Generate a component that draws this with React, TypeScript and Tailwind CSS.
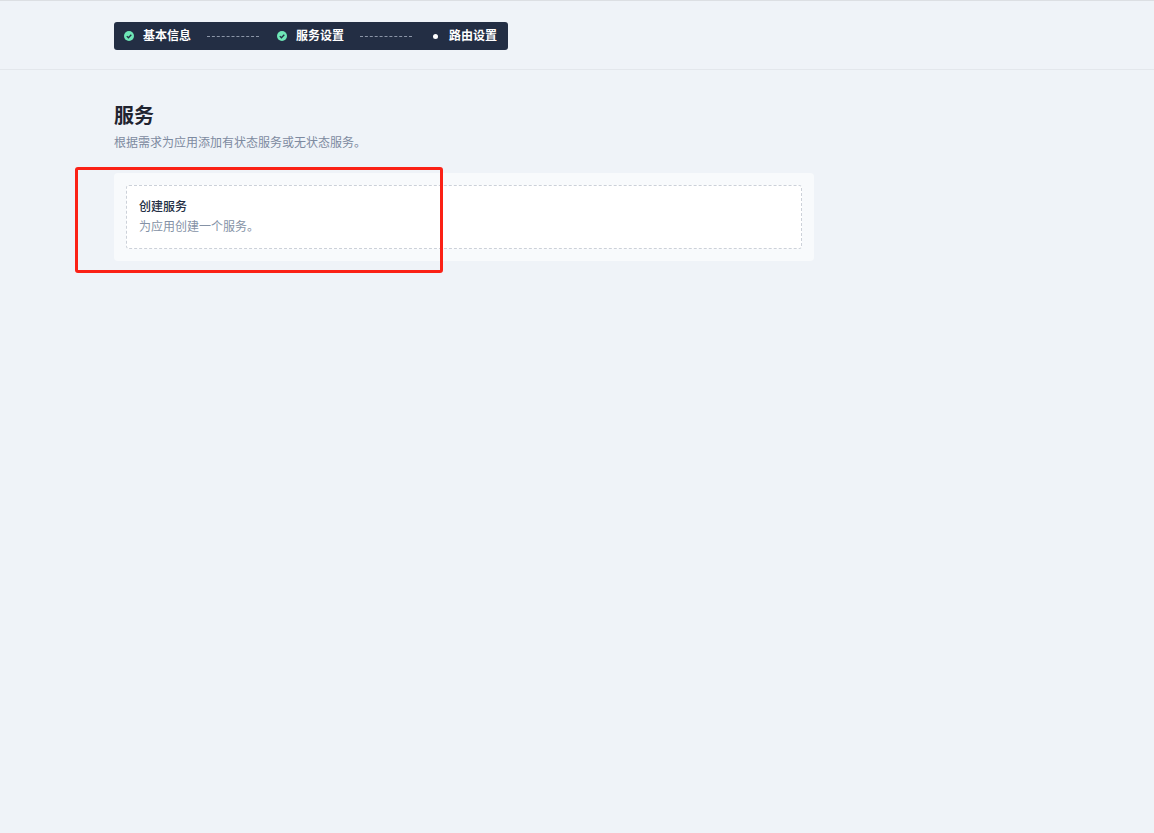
import React from 'react';

const font = { fontFamily: '"Inter", "Noto Sans CJK SC", sans-serif' };

const CheckIcon = () => (
  <svg width="10" height="10" viewBox="0 0 10 10" className="shrink-0">
    <circle cx="5" cy="5" r="5" fill="#6ee7b7" />
    <path d="M2.8 5.1 4.4 6.7 7.3 3.7" fill="none" stroke="#232e44" strokeWidth="1.3" />
  </svg>
);

const Dashes = () => <div className="w-[52px] border-t border-dashed border-[#8b95a7]" />;

const App = () => {
  return (
    <div className="relative min-h-[833px] bg-[#eff3f8] font-['Inter','Noto_Sans_CJK_SC',sans-serif]" style={font}>
      <header className="h-[70px] border-t border-b border-t-[#dcdfe3] border-b-[#e3e7ec] pl-[114px] pt-[21px]">
        <div className="flex h-7 w-[394px] items-center rounded-[3px] bg-[#232e44] pl-[10px] text-xs font-bold text-white">
          <CheckIcon />
          <span className="ml-[9px] w-12 whitespace-nowrap">基本信息</span>
          <div className="ml-4"><Dashes /></div>
          <div className="ml-[18px]"><CheckIcon /></div>
          <span className="ml-[9px] w-12 whitespace-nowrap">服务设置</span>
          <div className="ml-4"><Dashes /></div>
          <div className="ml-[21px] h-[5px] w-[5px] rounded-full bg-white" />
          <span className="ml-[11px] w-12 whitespace-nowrap">路由设置</span>
        </div>
      </header>

      <main className="pl-[114px] pt-[32px]">
        <h1 className="text-xl leading-7 font-semibold text-[#1f2430]">服务</h1>
        <p className="mt-[3px] text-xs leading-5 text-[#7d8aa0]">根据需求为应用添加有状态服务或无状态服务。</p>
        <div className="mt-[20px] w-[700px] rounded bg-[#f8fafc] p-3">
          <div className="h-16 rounded-[3px] border border-dashed border-[#ccd1d9] bg-white px-3 pt-[11px]">
            <div className="text-xs leading-5 font-medium text-[#232e44]">创建服务</div>
            <div className="text-xs leading-5 text-[#8592a6]">为应用创建一个服务。</div>
          </div>
        </div>
      </main>

      {/* annotation drawn over the page */}
      <div className="absolute left-[75px] top-[167px] h-[106px] w-[368px] rounded-[3px] border-[3px] border-[#fb2116]" />
    </div>
  );
};

export default App;
